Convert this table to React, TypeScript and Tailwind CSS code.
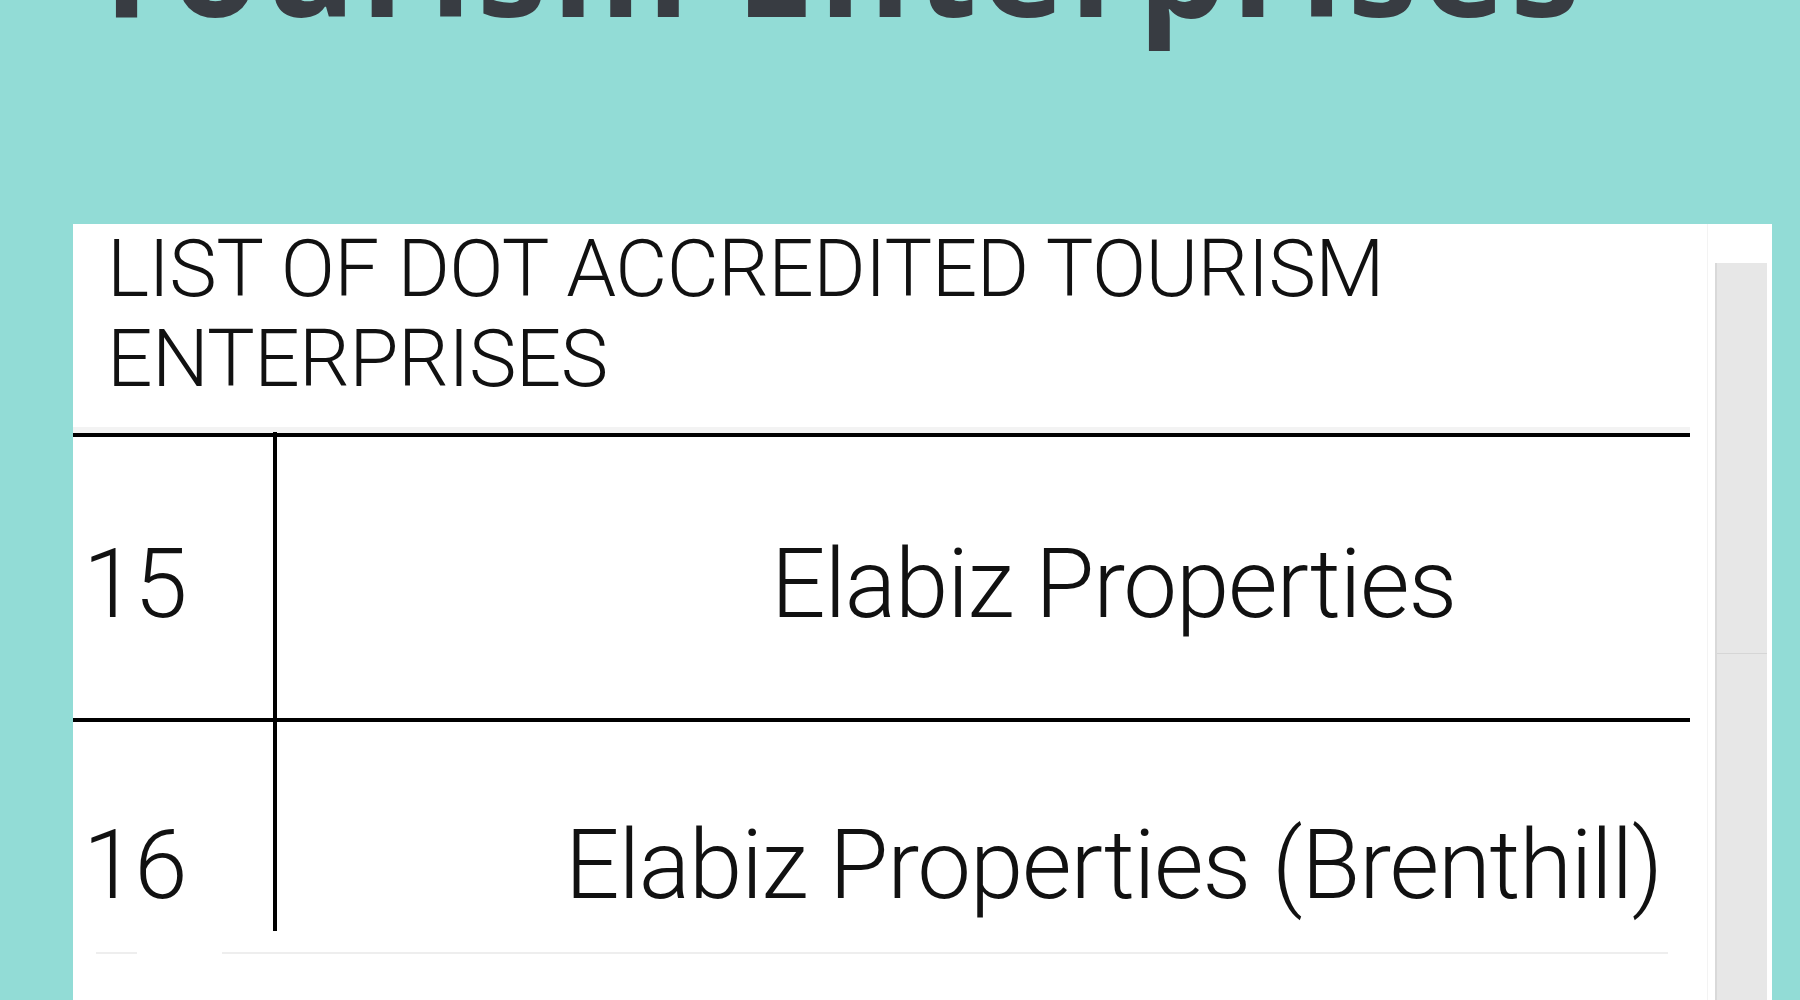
import React from 'react';

const rows = [
  { no: '15', name: 'Elabiz Properties' },
  { no: '16', name: 'Elabiz Properties (Brenthill)' },
];

export default function App() {
  return (
    <div className="h-[1000px] w-[1800px] overflow-hidden bg-[#92dcd6] font-['Roboto',sans-serif]">
      {/* page title, mostly scrolled off the top */}
      <h1 className="-mt-[107px] pl-[86px] font-['Open_Sans',sans-serif] text-[140px] font-bold leading-none tracking-[5px] whitespace-nowrap text-[#383c42]">
        Tourism Enterprises
      </h1>

      <div className="mt-[191px] ml-[73px] flex h-[800px] w-[1699px] bg-white">
        <div className="w-[1617px] overflow-hidden">
          {/* card header */}
          <div className="border-b-[6px] border-[#f3f3f3] pb-[23px] pl-[34px] text-[80px] font-light leading-[90px] tracking-[-0.6px] text-[#111]">
            LIST OF DOT ACCREDITED TOURISM
            <br />
            ENTERPRISES
          </div>

          {/* table */}
          <div className="w-[1877px] border-t-4 border-black text-[96px] font-light leading-none text-[#111]">
            <div className="flex h-[285px] border-b-4 border-black">
              <div className="w-[200px] pt-[99px] pl-[10px] tracking-[-2px]">{rows[0].no}</div>
              <div className="-mt-[5px] w-[4px] bg-black" />
              <div className="flex-1 pt-[99px] text-center tracking-[-1.2px]">{rows[0].name}</div>
            </div>
            <div className="flex h-[209px] items-start">
              <div className="w-[200px] pt-[95px] pl-[10px] tracking-[-2px]">{rows[1].no}</div>
              <div className="h-[209px] w-[4px] bg-black" />
              <div className="flex-1 pt-[95px] text-center tracking-[-1.2px]">{rows[1].name}</div>
            </div>
          </div>

          {/* faint separator below the table */}
          <div className="mt-[21px] flex h-[2px]">
            <div className="ml-[23px] w-[41px] bg-[#eeeeee]" />
            <div className="ml-[85px] w-[1446px] bg-[#eeeeee]" />
          </div>
        </div>

        {/* scrollbar */}
        <div className="ml-[17px] flex-1 border-l border-[#f3f3f3] pt-[39px] pl-[7px] pr-[5px]">
          <div className="h-full border-l-2 border-[#d9d9d9] bg-[#e7e7e7]">
            <div className="h-[391px] border-b border-[#d6d6d6]" />
          </div>
        </div>
      </div>
    </div>
  );
}
